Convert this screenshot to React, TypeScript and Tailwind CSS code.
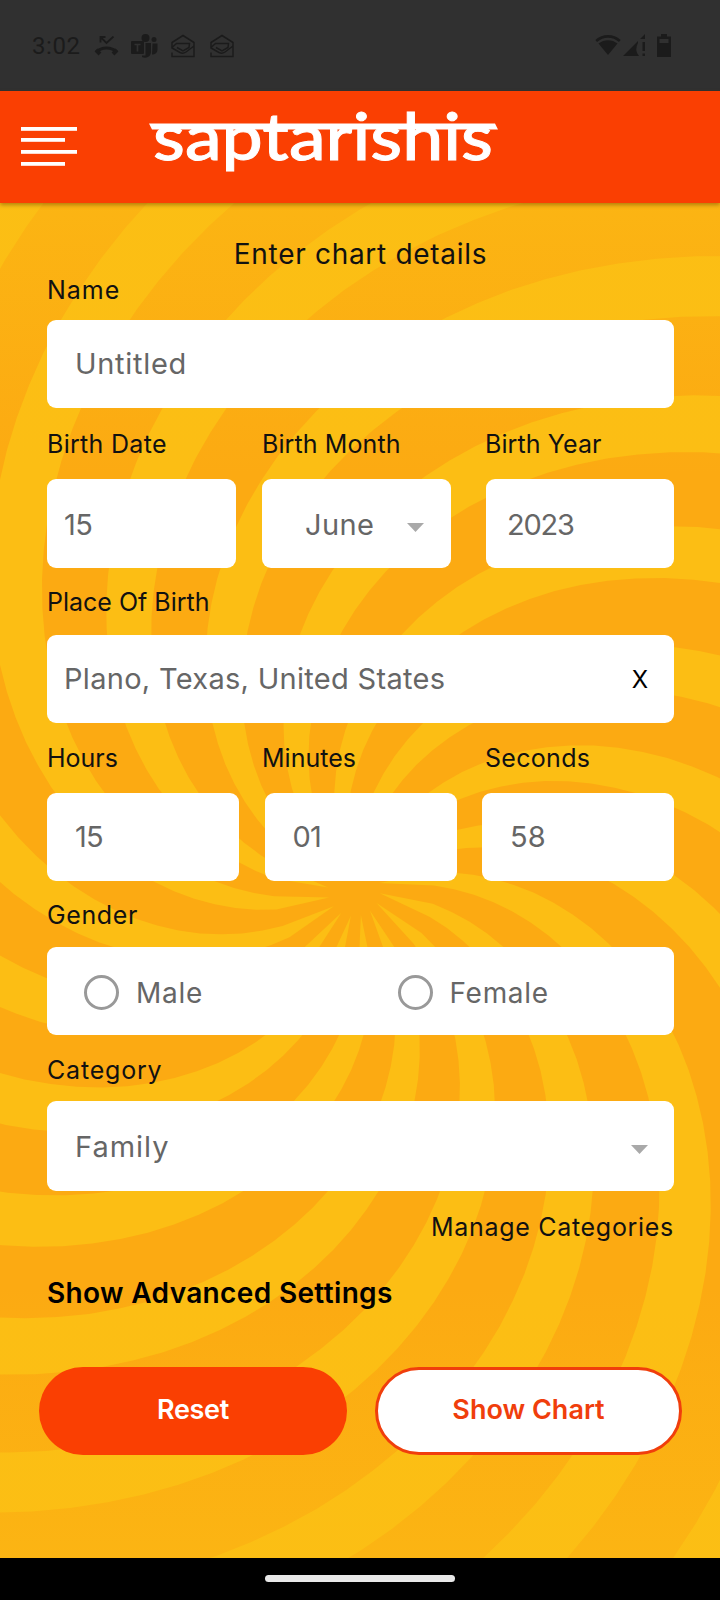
import React from "react";

// ─── Swirl background ─────────────────────────────────────────────────────────
const SWIRL = { cx: 354, cy: 687, arms: 16, start: 21.5, width: 9.6, twist: 0.137, reach: 960 };
// ──────────────────────────────────────────────────────────────────────────────

// Point on an Archimedean spiral, angle in degrees clockwise from the x axis
function spiralPoint(angle: number, r: number) {
  const t = ((angle + SWIRL.twist * r) * Math.PI) / 180;
  return `${(SWIRL.cx + r * Math.cos(t)).toFixed(1)},${(SWIRL.cy + r * Math.sin(t)).toFixed(1)}`;
}

function armPoints(index: number) {
  const step = (index * 360) / SWIRL.arms;
  // arms sit slightly closer together on the upper side
  const a = SWIRL.start + step - 0.9 * (1 - Math.cos((step * Math.PI) / 180));
  const near: string[] = [];
  const far: string[] = [];
  for (let r = 80; r <= SWIRL.reach; r += 20) {
    near.push(spiralPoint(a, r));
    far.unshift(spiralPoint(a + SWIRL.width, r));
  }
  return [spiralPoint(a + SWIRL.width / 2, 26), ...near, ...far].join(" ");
}

function Swirl() {
  return (
    <svg viewBox="0 0 720 1355" aria-hidden="true" className="absolute inset-0 w-full h-full">
      <defs>
        <linearGradient id="fade" x1="0" y1="0" x2="0" y2="1">
          <stop offset="0" stopColor="#fbbf14" stopOpacity="0.5" />
          <stop offset="0.2" stopColor="#fbbf14" stopOpacity="0" />
          <stop offset="0.8" stopColor="#fbbf14" stopOpacity="0" />
          <stop offset="1" stopColor="#fbbf14" stopOpacity="0.5" />
        </linearGradient>
      </defs>
      <rect width="720" height="1355" fill="#fcaa12" />
      {Array.from({ length: SWIRL.arms }, (_, i) => (
        <polygon key={i} points={armPoints(i)} fill="#fcbe14" />
      ))}
      <rect width="720" height="1355" fill="url(#fade)" />
    </svg>
  );
}

function MailIcon() {
  return (
    <svg width="24" height="24" viewBox="0 0 24 24" fill="none" stroke="#1b1b1b" strokeWidth="1.5">
      <path d="M1 18.500v4h22V8.500L12 1.500 1 8.500v5.500l8 4.500q3 1.500 6-.5l8-6" />
      <path d="M1 13.500 5.500 9.500h13l-.5 4-6 3.500-6-3.500" />
    </svg>
  );
}

function StatusBar() {
  return (
    <div className="h-[91px] pt-px bg-[#303030] flex items-center justify-between pl-8 pr-[49px] text-[#1b1b1b]">
      <div className="flex items-center">
        <span className="w-[62px] text-[24px] tracking-[0.6px] font-[Roboto,sans-serif]">3:02</span>
        <svg width="25" height="20" viewBox="0 0 24 20" fill="none" stroke="#1b1b1b">
          <path d="M1.500 16C7 10.500 17 10.500 22.500 16" strokeWidth="3" />
          <path d="M6 1l6 6 7-6.500M6 6.500V1h5" strokeWidth="1.800" />
          <path d="M1.500 14l4 4M22.500 14l-4 4" strokeWidth="4" />
        </svg>
        <svg width="27" height="25" viewBox="0 0 27 25" fill="#1b1b1b" className="ml-3">
          <circle cx="14.500" cy="4" r="4" />
          <circle cx="23" cy="5.500" r="2.500" />
          <path d="M14.500 9H20v9a6 6 0 0 1-9 5v-1.500h3.500z" />
          <path d="M21.500 9.500h5V16a5 5 0 0 1-5.500 4.500z" />
          <rect y="7" width="13" height="13" rx="1" />
          <path d="M3.500 10.500h6M6.500 10.500v7" stroke="#303030" strokeWidth="1.700" />
        </svg>
        <span className="ml-[13px] flex gap-[15px]">
          <MailIcon />
          <MailIcon />
        </span>
      </div>
      <svg width="76" height="24" viewBox="0 0 76 24" fill="#1b1b1b">
        <path d="M1.200 7C8 .8 18 .8 24.800 7" fill="none" stroke="#1b1b1b" strokeWidth="2.600" />
        <path d="M3.500 9.500C9 5 17 5 22.500 9.500L13 21z" />
        <path d="M28 22 43 7v2q-4 7 1 13z" />
        <path d="M45 5l5-5v5zM47.500 8H50v9h-2.500zM47.500 19.500H50V22h-2.500z" />
        <path d="M66 0h6v2.500h4V23H62V2.500h4z" />
        <path d="M64.500 5h9v4h-9z" fill="#303030" />
      </svg>
    </div>
  );
}

function Header() {
  return (
    <header className="relative z-10 h-28 bg-[#fa3f02] flex items-start shadow-[0_2px_4px_rgba(90,60,0,0.45)]">
      <svg width="56" height="40" viewBox="0 0 56 40" fill="#fff" className="ml-[21px] mt-[35px]">
        <rect y="1" width="56" height="3.800" />
        <rect y="12" width="44" height="3.800" />
        <rect y="24" width="56" height="3.800" />
        <rect y="36" width="44" height="3.800" />
      </svg>
      <svg width="360" height="100" viewBox="0 0 360 100" className="ml-[70px]">
        <text
          x="6"
          y="68.500"
          textLength="340"
          lengthAdjust="spacingAndGlyphs"
          fill="#fff"
          stroke="#fff"
          strokeWidth="0.900"
          fontSize="66"
          fontWeight="500"
          fontFamily="Lato, sans-serif"
        >
          saptarishis
        </text>
        <path d="M2 32.500h346l3 6H5z" fill="#fff" />
      </svg>
    </header>
  );
}

function Label({ children, className = "" }: { children: React.ReactNode; className?: string }) {
  return <div className={`flex items-center pt-0.5 text-[25px] ${className}`}>{children}</div>;
}

function Field({ children, className = "" }: { children: React.ReactNode; className?: string }) {
  return (
    <div className={`flex items-center bg-white rounded-[9px] text-[29px] text-[#666] ${className}`}>{children}</div>
  );
}

function Caret() {
  return (
    <svg width="17" height="9" viewBox="0 0 17 9" fill="#a9a9a9" className="mt-[5px]">
      <path d="M0 0h17L8.500 9z" />
    </svg>
  );
}

function Radio({ label }: { label: string }) {
  return (
    <div className="flex-1 flex items-center pt-[3px] pl-[37px] text-[28px] tracking-[0.7px]">
      <span className="w-[35px] h-[35px] rounded-full border-3 border-[#999]" />
      <span className="ml-[17px]">{label}</span>
    </div>
  );
}

export default function App() {
  return (
    <div className="w-[720px] h-[1600px] flex flex-col bg-black font-[Inter,sans-serif] text-[#111]">
      <StatusBar />
      <Header />

      <main className="relative h-[1355px] overflow-hidden">
        <Swirl />

        <div className="relative pl-[47px] pr-[46px] pt-[31px]">
          <h1 className="h-10 flex items-center justify-center text-[28px] tracking-[0.7px]">Enter chart details</h1>

          <Label className="h-8 mb-3.5 tracking-[1px]">Name</Label>
          <Field className="h-[88px] pl-7 tracking-[0.7px]">Untitled</Field>

          {/* Birth date */}
          <div className="flex h-[71px]">
            <Label className="w-[215px] tracking-[0.3px]">Birth Date</Label>
            <Label className="w-[223px] tracking-[0.1px]">Birth Month</Label>
            <Label className="tracking-[0.1px]">Birth Year</Label>
          </div>
          <div className="flex h-[89px]">
            <Field className="w-[189px] pl-[17px] pt-0.5 tracking-[-0.5px]">15</Field>
            <Field className="w-[189px] ml-[26px] pl-[43px] pr-[27px] pt-0.5 justify-between tracking-[0.4px]">
              June <Caret />
            </Field>
            <Field className="w-[188px] ml-[35px] pl-[21px] pt-0.5 tracking-[-1.2px]">2023</Field>
          </div>

          <Label className="h-[67px]">Place Of Birth</Label>
          <Field className="h-[88px] pl-[17px] pr-[26px] justify-between tracking-[0.3px]">
            Plano, Texas, United States
            <span className="pt-0.5 text-[24px] tracking-normal text-black">X</span>
          </Field>

          {/* Birth time */}
          <div className="flex h-[70px]">
            <Label className="w-[215px]">Hours</Label>
            <Label className="w-[223px]">Minutes</Label>
            <Label className="tracking-[0.3px]">Seconds</Label>
          </div>
          <div className="flex justify-between h-[88px]">
            <Field className="w-[192px] pl-7 tracking-[-0.8px]">15</Field>
            <Field className="w-[192px] pl-7 tracking-[-0.8px]">01</Field>
            <Field className="w-[192px] pl-7">58</Field>
          </div>

          <Label className="h-[66px] pt-1 tracking-[0.6px]">Gender</Label>
          <Field className="h-[88px]">
            <Radio label="Male" />
            <Radio label="Female" />
          </Field>

          <Label className="h-[66px] pt-1.5 tracking-[0.8px]">Category</Label>
          <Field className="h-[90px] pl-7 pr-[26px] pt-0.5 justify-between tracking-[1px]">
            Family <Caret />
          </Field>

          <Label className="h-[72px] justify-end tracking-[0.7px]">Manage Categories</Label>
          <div className="h-[60px] flex items-center text-[28px] font-semibold tracking-[0.35px] text-black">
            Show Advanced Settings
          </div>

          <div className="-mx-2 mt-11 flex justify-between text-[27px] font-semibold">
            <button className="w-[308px] h-[88px] pb-px rounded-full bg-[#fa3f02] text-white tracking-[-0.3px]">
              Reset
            </button>
            <button className="w-[307px] h-[88px] pb-px rounded-full bg-white border-3 border-[#f03e0c] text-[#f03e0c]">
              Show Chart
            </button>
          </div>
        </div>
      </main>

      <div className="h-[42px] flex justify-center pt-[17px]">
        <span className="w-[190px] h-[7px] rounded-full bg-[#e8e8e8]" />
      </div>
    </div>
  );
}
